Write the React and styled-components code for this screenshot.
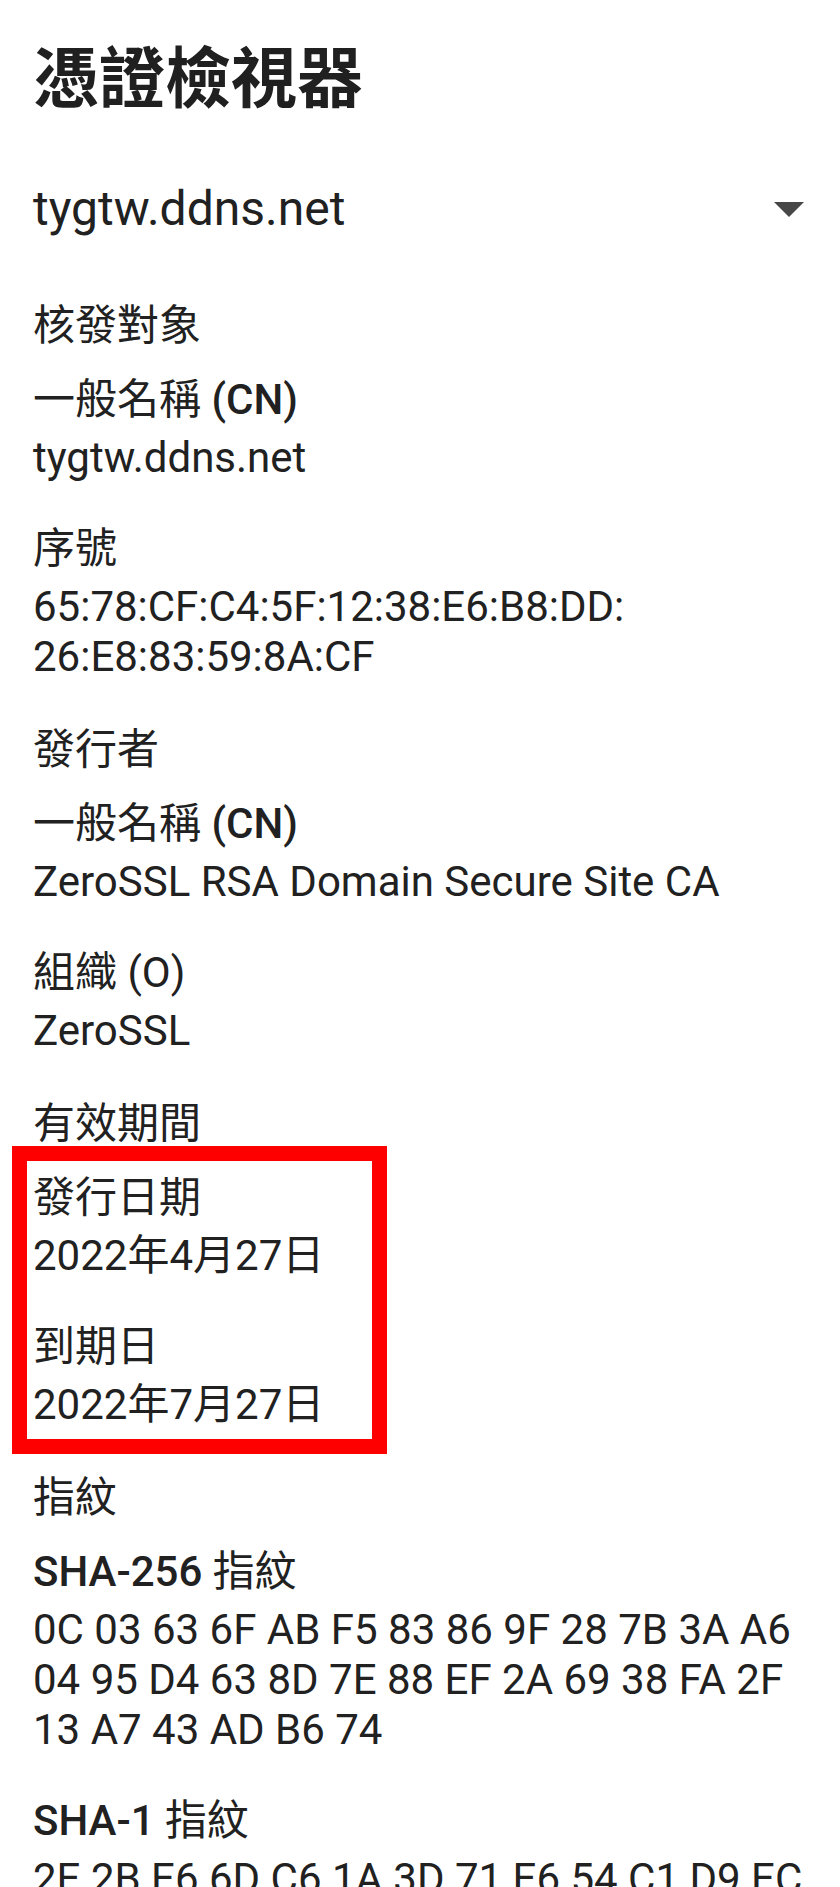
import React from "react";
import styled, { createGlobalStyle } from "styled-components";

const GlobalStyle = createGlobalStyle`
  body {
    margin: 0;
    background: #ffffff;
  }
`;

const sections = [
  {
    title: "核發對象",
    fields: [
      { label: "一般名稱", tag: "(CN)", bold: true, lines: ["tygtw.ddns.net"] },
      { label: "序號", lines: ["65:78:CF:C4:5F:12:38:E6:B8:DD:", "26:E8:83:59:8A:CF"] },
    ],
  },
  {
    title: "發行者",
    fields: [
      { label: "一般名稱", tag: "(CN)", bold: true, lines: ["ZeroSSL RSA Domain Secure Site CA"] },
      { label: "組織", tag: "(O)", lines: ["ZeroSSL"] },
    ],
  },
  {
    title: "有效期間",
    marked: true,
    fields: [
      { label: "發行日期", lines: ["2022年4月27日"] },
      { label: "到期日", lines: ["2022年7月27日"] },
    ],
  },
  {
    title: "指紋",
    fields: [
      {
        lead: "SHA-256",
        label: "指紋",
        lines: ["0C 03 63 6F AB F5 83 86 9F 28 7B 3A A6 04 95 D4 63 8D 7E 88 EF 2A 69 38 FA 2F 13 A7 43 AD B6 74"],
      },
      { lead: "SHA-1", label: "指紋", lines: ["2E 2B E6 6D C6 1A 3D 71 E6 54 C1 D9 EC"] },
    ],
  },
];

function Field({ field }) {
  return (
    <FieldBox>
      <Label>
        {field.lead && <Strong>{field.lead} </Strong>}
        {field.label}
        {field.tag && (field.bold ? <Strong> {field.tag}</Strong> : " " + field.tag)}
      </Label>
      {field.lines.map((line) => (
        <Value key={line}>{line}</Value>
      ))}
    </FieldBox>
  );
}

export default function App() {
  return (
    <Page>
      <GlobalStyle />
      <Title>憑證檢視器</Title>
      <Picker>
        <span>tygtw.ddns.net</span>
        <svg width="30" height="15" viewBox="0 0 10 5">
          <path d="M0 0l5 5 5-5z" fill="#474747" />
        </svg>
      </Picker>

      {sections.map((section) => (
        <Section key={section.title}>
          <SectionTitle>{section.title}</SectionTitle>
          {section.marked ? (
            <Marked>
              <Frame />
              {section.fields.map((f) => (
                <Field key={f.label} field={f} />
              ))}
            </Marked>
          ) : (
            section.fields.map((f) => <Field key={f.label + (f.lead || "")} field={f} />)
          )}
        </Section>
      ))}
    </Page>
  );
}

const Page = styled.div`
  padding: 40px 36px 0 33px;
  font-family: Roboto, "Noto Sans CJK TC", sans-serif;
  color: #212121;
  overflow: hidden;
`;

const Title = styled.h1`
  margin: 0;
  font-size: 66px;
  line-height: 80px;
  font-weight: 700;
  color: #202020;
`;

const Picker = styled.div`
  display: flex;
  justify-content: space-between;
  align-items: center;
  height: 60px;
  margin-top: 59px;
  font-size: 48px;
  line-height: 60px;
`;

const Section = styled.section`
  margin-top: 62px;

  & + & {
    margin-top: 43px;
  }
`;

const SectionTitle = styled.div`
  font-size: 42px;
  line-height: 50px;
  margin-bottom: 24px;
`;

const FieldBox = styled.div`
  & + & {
    margin-top: 41px;
  }
`;

const Label = styled.div`
  font-size: 42px;
  line-height: 50px;
  margin-bottom: 8px;
`;

const Strong = styled.span`
  font-weight: 500;
`;

const Value = styled.div`
  font-size: 42px;
  line-height: 50px;
`;

const Marked = styled.div`
  position: relative;
`;

const Frame = styled.div`
  position: absolute;
  left: -21px;
  top: -27px;
  width: 375px;
  height: 308px;
  box-sizing: border-box;
  border: 15px solid #ff0000;
  pointer-events: none;
`;
